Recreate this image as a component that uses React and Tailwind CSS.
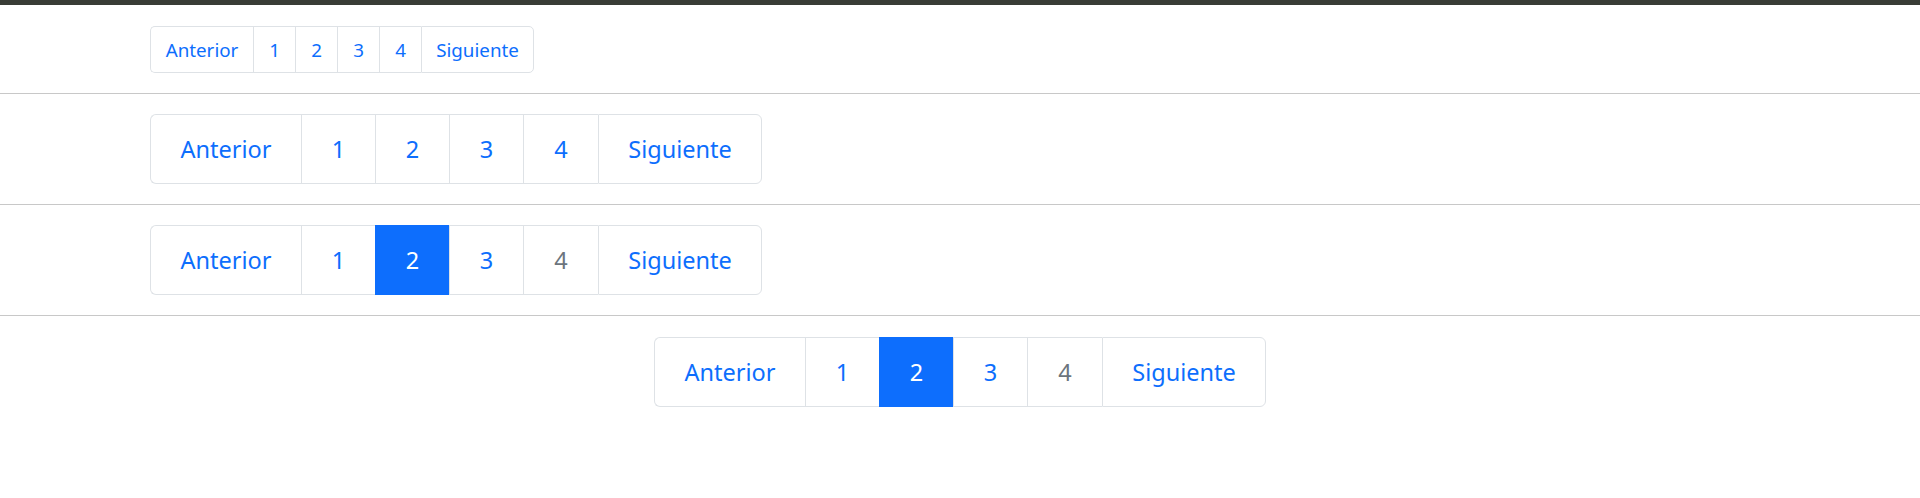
import React from "react";

const labels = ["Anterior", "1", "2", "3", "4", "Siguiente"];

function Pager({ size, widths, active, disabled }) {
  const lg = size === "lg";
  return (
    <ul className={`flex ${lg ? "h-[70px] text-[23.5px]" : "h-[47px] text-[18.8px]"}`}>
      {labels.map((label, i) => {
        const first = i === 0;
        const last = i === labels.length - 1;
        const isActive = active === i;
        const isDisabled = disabled === i;
        let cls =
          "flex items-center justify-center border-y border-l select-none ";
        if (last) cls += "border-r ";
        if (first) cls += lg ? "rounded-l-[6px] " : "rounded-l-[5px] ";
        if (last) cls += lg ? "rounded-r-[6px] " : "rounded-r-[5px] ";
        if (isActive) cls += "bg-[#0d6efd] border-[#0d6efd] text-white ";
        else if (isDisabled) cls += "bg-white border-[#dee2e6] text-[#6c757d] ";
        else cls += "bg-white border-[#dee2e6] text-[#0d6efd] ";
        return (
          <li key={label} className={cls} style={{ width: widths[i] }}>
            <span className="pt-[1px]">{label}</span>
          </li>
        );
      })}
    </ul>
  );
}

const smallW = [103, 42, 42, 42, 42, 113];
const lgW = [151, 74, 74, 74, 75, 164];

export default function App() {
  return (
    <div
      className="min-h-[498px] bg-white"
      style={{ fontFamily: '"Segoe UI", "Noto Sans", "Liberation Sans", Arial, sans-serif' }}
    >
      <div className="h-[5px] bg-[#393c36]" />
      <div className="pl-[150px] pt-[21px]">
        <Pager size="sm" widths={smallW} />
      </div>
      <div className="mt-[20px] h-px bg-[#c8c8c8]" />
      <div className="pl-[150px] pt-[20px]">
        <Pager size="lg" widths={lgW} />
      </div>
      <div className="mt-[20px] h-px bg-[#c8c8c8]" />
      <div className="pl-[150px] pt-[20px]">
        <Pager size="lg" widths={lgW} active={2} disabled={4} />
      </div>
      <div className="mt-[20px] h-px bg-[#c8c8c8]" />
      <div className="flex justify-center pt-[21px]">
        <Pager size="lg" widths={lgW} active={2} disabled={4} />
      </div>
    </div>
  );
}
